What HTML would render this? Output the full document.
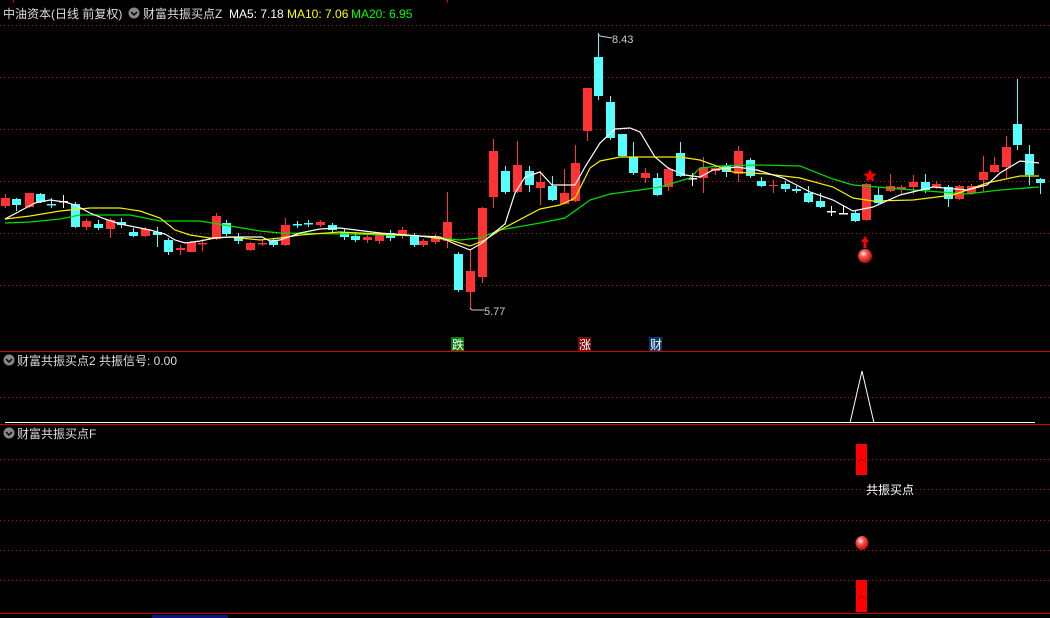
<!DOCTYPE html>
<html><head><meta charset="utf-8"><style>
html,body{margin:0;padding:0;background:#000;width:1050px;height:618px;overflow:hidden}
svg{display:block}
text{font-family:"Liberation Sans","Noto Sans CJK SC",sans-serif}
</style></head><body>
<svg id="s" width="1050" height="618" viewBox="0 0 1050 618" xmlns="http://www.w3.org/2000/svg" shape-rendering="crispEdges">
<defs>
<radialGradient id="ball" cx="0.4" cy="0.35" r="0.7"><stop offset="0" stop-color="#fff"/><stop offset="0.35" stop-color="#f55"/><stop offset="1" stop-color="#a00"/></radialGradient>
</defs>
<rect width="1050" height="618" fill="#000"/>
<g id="grid" stroke="#b01818" stroke-width="1" stroke-dasharray="1,3">
<line x1="0" y1="25.5" x2="1050" y2="25.5"/><line x1="0" y1="77.5" x2="1050" y2="77.5"/><line x1="0" y1="129.5" x2="1050" y2="129.5"/><line x1="0" y1="181.5" x2="1050" y2="181.5"/><line x1="0" y1="233.5" x2="1050" y2="233.5"/><line x1="0" y1="285.5" x2="1050" y2="285.5"/>
<line x1="0" y1="397.5" x2="1050" y2="397.5"/>
<line x1="0" y1="459.5" x2="1050" y2="459.5"/><line x1="0" y1="489.5" x2="1050" y2="489.5"/><line x1="0" y1="520.5" x2="1050" y2="520.5"/><line x1="0" y1="550.5" x2="1050" y2="550.5"/><line x1="0" y1="580.5" x2="1050" y2="580.5"/>
</g>
<rect x="0" y="351" width="1050" height="1" fill="#d00000"/>
<rect x="0" y="424" width="1050" height="1" fill="#d00000"/>
<rect x="0" y="613" width="1050" height="1" fill="#d00000"/>
<rect x="13" y="0" width="1" height="3" fill="#c00"/><rect x="447" y="0" width="1" height="3" fill="#c00"/>
<rect x="152" y="615" width="76" height="3" fill="#11118a"/>
<g id="c"></g>
<g fill="none" stroke-width="1.2" shape-rendering="auto">
<polyline stroke="#00e000" points="5,223 30,222 60,219 80,215 130,215 160,221 200,221 230,226 260,231 280,233 350,234 420,236 460,240 480,238 500,230 540,223 565,218 590,200 610,194 640,190 660,187 690,178 700,168 720,166 760,165 800,166 833,179 853,185 900,189 967,194 1000,190 1039,187"/>
<polyline stroke="#f0f000" points="5,219 30,216 60,211 90,208 120,208 140,211 160,218 175,230 190,235 210,238 230,237 260,240 280,238 300,235 340,232 420,236 450,240 470,246 485,240 500,230 540,209 560,205 575,198 590,168 600,161 620,157 640,157 680,157 700,160 733,172 767,174 800,178 833,187 853,198 873,201 913,200 953,195 987,183 1020,176 1039,176"/>
<polyline stroke="#fff" points="5,219 20,211 35,203 50,200 65,202 75,205 90,213 105,219 120,224 135,227 150,230 165,234 175,240 185,243 200,241 215,238 230,237 245,237 262,237 270,241 280,240 300,233 320,229 340,228 380,233 420,236 440,237 455,244 470,250 482,243 495,232 505,224 515,193 525,177 540,172 552,185 575,185 585,167 600,143 615,129 630,128 640,132 655,157 668,168 685,175 700,177 713,170 737,167 757,170 783,178 810,192 833,200 853,211 873,207 900,195 933,187 967,190 987,185 1000,173 1020,161 1039,163"/>
</g>
<g shape-rendering="auto">
<polyline points="598,34 600,36 612,38" fill="none" stroke="#ccc"/>
<text x="612" y="43" fill="#ccc" font-size="11">8.43</text>
<polyline points="470,308 472,310 484,310" fill="none" stroke="#ccc"/>
<text x="484" y="315" fill="#ccc" font-size="11">5.77</text>
<rect x="451" y="337" width="13" height="14" fill="#0a7a0a"/><text x="452" y="349" fill="#fff" font-size="12">跌</text>
<rect x="578" y="337" width="13" height="14" fill="#7a0a0a"/><text x="579" y="349" fill="#fff" font-size="12">涨</text>
<rect x="649" y="337" width="13" height="14" fill="#0a3a6a"/><text x="650" y="349" fill="#fff" font-size="12">财</text>
<polygon points="870,169 871.9,173.5 876.7,173.8 873,177 874.2,181.7 870,179.2 865.8,181.7 867,177 863.3,173.8 868.1,173.5" fill="#f00"/>
<polygon points="865,236 869,242 866.5,242 866.5,248 863.5,248 863.5,242 861,242" fill="#f00"/>
<circle cx="865" cy="256" r="7" fill="url(#ball)"/>
<text x="3" y="18" fill="#ddd" font-size="12">中油资本(日线 前复权)</text>
<circle cx="134" cy="13" r="5.5" fill="#888"/><polyline points="131,12 134,15 137,12" fill="none" stroke="#000" stroke-width="1.5"/>
<text x="143" y="18" fill="#ddd" font-size="12">财富共振买点Z</text>
<text x="229" y="18" fill="#fff" font-size="12">MA5: 7.18</text>
<text x="287" y="18" fill="#ff0" font-size="12">MA10: 7.06</text>
<text x="351" y="18" fill="#0f0" font-size="12">MA20: 6.95</text>
<circle cx="9" cy="360" r="5.5" fill="#888"/><polyline points="6,359 9,362 12,359" fill="none" stroke="#000" stroke-width="1.5"/>
<text x="17" y="365" fill="#ddd" font-size="12">财富共振买点2 共振信号: 0.00</text>
<circle cx="9" cy="433" r="5.5" fill="#888"/><polyline points="6,432 9,435 12,432" fill="none" stroke="#000" stroke-width="1.5"/>
<text x="17" y="438" fill="#ddd" font-size="12">财富共振买点F</text>
<polyline points="850,423 862,371 874,423" fill="none" stroke="#fff" stroke-width="1"/>
<ellipse cx="862" cy="543" rx="6.5" ry="7" fill="url(#ball)"/>
</g>
<rect x="5" y="422" width="1030" height="1" fill="#fff"/>
<rect x="856" y="444" width="11" height="31" fill="#f00"/>
<rect x="856" y="580" width="11" height="32" fill="#f00"/>
<g shape-rendering="auto">
<polyline points="858,462 861.5,459 865,462" fill="none" stroke="#900"/>
<polyline points="858,599 861.5,596 865,599" fill="none" stroke="#900"/>
<text x="866" y="494" fill="#fff" font-size="12">共振买点</text>
</g>
</svg>
<script>
var R="#ff3333",C="#55ffff",W="#ffffff";
var d=[
[5,198,206,194,208,R],[16,199,205,198,211,C],[29,193,207,193,208,R],[40,194,202,193,203,C],[51,204,204,198,208,C],[63,201,201,195,208,W],
[75,204,227,202,228,C],[86,221,227,219,230,R],[98,224,228,220,230,C],[110,220,229,218,238,R],[121,222,225,218,228,C],[133,232,236,228,237,C],
[145,229,236,227,237,R],[157,232,235,227,247,C],[168,240,252,238,255,C],[180,248,250,245,255,R],[191,242,252,241,252,R],[202,243,243,239,251,R],
[216,216,239,213,240,R],[226,223,234,220,236,C],[238,237,241,233,244,C],[250,243,250,242,251,R],[262,243,243,240,246,R],[273,241,245,238,247,C],
[285,225,245,218,246,R],[297,224,224,221,228,C],[308,223,223,220,227,C],[320,222,225,220,227,R],[332,225,230,223,232,C],[344,232,237,229,240,C],
[355,236,240,232,242,C],[367,237,240,233,243,R],[379,235,241,232,244,R],[390,233,238,230,241,C],[402,230,236,227,239,R],[414,236,245,233,247,C],
[423,241,245,239,247,R],[435,237,242,234,244,R],[447,222,241,192,248,R],[458,254,290,252,292,C],[470,271,292,250,308,R],[482,208,277,207,283,R],
[493,151,197,139,208,R],[505,171,192,166,194,C],[517,165,192,141,193,R],[529,171,185,166,192,C],[540,182,188,171,205,R],[552,186,200,176,201,C],
[564,193,204,169,205,R],[575,163,201,145,202,R],[587,88,131,88,141,R],[598,57,96,33,100,C],[610,102,138,96,140,C],[622,134,156,134,157,C],
[633,157,173,142,175,C],[645,173,178,168,183,R],[657,178,195,173,196,C],[668,169,187,167,191,R],[680,153,176,142,177,C],[692,178,178,173,186,W],
[703,168,178,157,193,R],[715,168,171,165,175,R],[726,166,172,163,177,C],[738,151,174,146,182,R],[750,160,176,158,178,C],[761,181,186,177,187,C],
[773,185,186,180,193,R],[785,184,189,181,192,C],[796,189,191,186,193,C],[808,193,202,186,203,C],[820,201,207,193,208,C],[831,211,211,206,216,W],
[843,213,213,206,213,W],[855,213,221,211,222,C],[866,184,220,183,221,R],[878,195,203,188,205,C],[890,186,191,174,192,R],[901,187,189,185,195,R],
[913,182,187,175,194,R],[925,182,190,174,193,C],[936,184,187,181,189,R],[948,187,199,185,207,C],[959,186,199,185,200,R],[971,186,193,184,195,R],
[983,172,180,156,192,R],[994,165,172,157,173,R],[1006,147,167,136,178,R],[1017,124,145,79,150,C],[1029,154,175,145,185,C],[1040,179,183,178,194,C]
];
var g=document.getElementById("c"),h="";
d.forEach(function(a){var x=a[0],c=a[5];
h+='<rect x="'+x+'" y="'+a[3]+'" width="1" height="'+(a[4]-a[3])+'" fill="'+c+'"/>';
var bh=a[2]-a[1];if(bh<1)h+='<rect x="'+(x-4)+'" y="'+a[1]+'" width="9" height="1.5" fill="'+c+'"/>';
else h+='<rect x="'+(x-4)+'" y="'+a[1]+'" width="9" height="'+bh+'" fill="'+c+'"/>';});
g.innerHTML=h;
</script>
</body></html>
